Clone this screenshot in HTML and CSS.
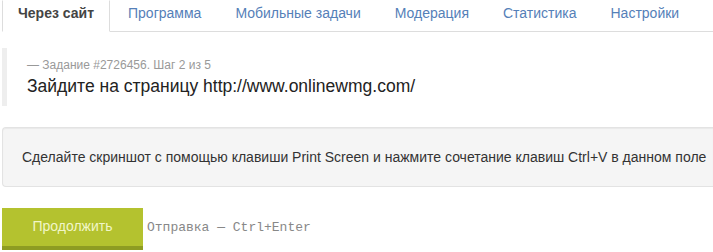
FILE: index.html
```html
<!DOCTYPE html>
<html lang="ru">
<head>
<meta charset="utf-8">
<title>Задание #2726456</title>
<link rel="stylesheet" href="styles.css">
</head>
<body>
<div class="page">
<ul class="tabs">
<li class="active"><a href="#">Через сайт</a></li>
<li><a href="#">Программа</a></li>
<li><a href="#">Мобильные задачи</a></li>
<li><a href="#">Модерация</a></li>
<li><a href="#">Статистика</a></li>
<li><a href="#">Настройки</a></li>
</ul>

<blockquote class="task">
<small>— Задание #2726456. Шаг 2 из 5</small>
<p>Зайдите на страницу http://www.onlinewmg.com/</p>
</blockquote>

<div class="well">Сделайте скриншот с помощью клавиши Print Screen и нажмите сочетание клавиш Ctrl+V в данном поле</div>

<div class="actions">
<button class="btn-go">Продолжить</button>
<span class="hint">Отправка — Ctrl+Enter</span>
</div>
</div>
</body>
</html>
```
FILE: styles.css
```css
body {
    margin: 0;
    font-family: "Liberation Sans", Arial, sans-serif;
    font-size: 14px;
    line-height: 20px;
    color: #333;
    background: #fff;
}
.page {
    margin-left: 2px;
}
.tabs {
    display: flex;
    margin: 0;
    padding: 0;
    list-style: none;
    border-bottom: 1px solid #ddd;
}
.tabs li {
    margin-right: 2px;
    margin-bottom: -1px;
}
.tabs a {
    display: block;
    padding: 2px 15px 8px;
    border: 1px solid transparent;
    color: #5580b8;
    text-decoration: none;
}
.tabs li.active a {
    color: #444;
    font-weight: bold;
    background: #fff;
    border-color: #ddd;
    border-top-color: transparent;
    border-bottom-color: #fff;
}
.task {
    margin: 16px 0 21px;
    padding: 9px 20px 7px;
    border-left: 5px solid #eee;
}
.task small {
    display: block;
    font-size: 12px;
    line-height: 16px;
    color: #999;
}
.task p {
    margin: 0;
    font-size: 17.5px;
    line-height: 26px;
    color: #222;
}
/* the box runs on past the right edge of the window */
.well {
    padding: 19px 0 19px 19px;
    margin-bottom: 21px;
    background: #f5f5f5;
    border: 1px solid #e3e3e3;
    border-right: 0;
    border-radius: 4px 0 0 4px;
    box-shadow: inset 0 1px 1px rgba(0, 0, 0, 0.05);
    white-space: nowrap;
    overflow: hidden;
}
.actions {
    display: flex;
    align-items: center;
}
.btn-go {
    width: 141px;
    height: 42px;
    padding: 0 0 2px;
    border: 0;
    border-bottom: 4px solid #8e9c22;
    background: #b4c22f;
    color: #f1f6c8;
    font-family: "Liberation Sans", Arial, sans-serif;
    font-size: 14px;
}
.hint {
    margin-left: 4px;
    margin-top: -2px;
    font-family: "Liberation Mono", "Courier New", monospace;
    font-size: 13px;
    color: #888;
}
```
